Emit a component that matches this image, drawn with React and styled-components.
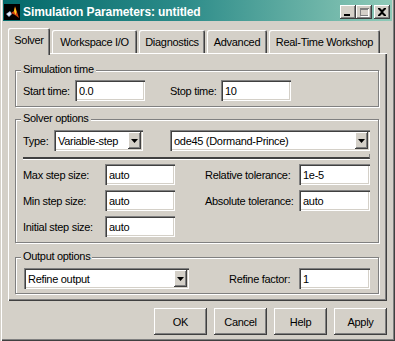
import styled, { createGlobalStyle } from "styled-components";

const Global = createGlobalStyle`
  html, body { margin: 0; padding: 0; background: #d4d0c8; }
  body { font-family: "Liberation Sans", Arial, sans-serif; font-size: 11px; letter-spacing: -0.3px; color: #000; }
  * { box-sizing: border-box; }
`;

const raised = `
  box-shadow: inset -1px -1px 0 #404040, inset 1px 1px 0 #fff, inset -2px -2px 0 #808080;
`;

const sunken = `
  box-shadow: inset 1px 1px 0 #808080, inset 2px 2px 0 #404040, inset -1px -1px 0 #fff, inset -2px -2px 0 #d4d0c8;
`;

const Window = styled.div`
  width: 395px;
  height: 341px;
  background: #d4d0c8;
  display: flex;
  flex-direction: column;
  padding: 0 3px 3px 3px;
  box-shadow: inset 1px 0 0 #d4d0c8, inset 2px 0 0 #fff, inset -1px -1px 0 #404040, inset -2px -2px 0 #808080;
`;

const TitleBar = styled.div`
  height: 21px;
  padding: 3px 2px 0 1px;
  display: flex;
  align-items: center;
  background: linear-gradient(to right, #03696a 0%, #2a8a88 45%, #8fcab8 100%);
`;

const TitleText = styled.div`
  flex: 1;
  margin-left: 3px;
  color: #fff;
  font-weight: bold;
  font-size: 12px;
  letter-spacing: -0.1px;
  white-space: nowrap;
`;

const CaptionButton = styled.div`
  width: 16px;
  height: 14px;
  background: #d4d0c8;
  margin-left: ${(p) => (p.$gap ? "2px" : "0")};
  display: flex;
  align-items: center;
  justify-content: center;
  ${raised}
`;

const Body = styled.div`
  flex: 1;
  display: flex;
  flex-direction: column;
  padding: 7px 5px 0 5px;
`;

const TabRow = styled.div`
  height: 25px;
  display: flex;
  align-items: flex-end;
  gap: 2px;
  position: relative;
  z-index: 1;
`;

const Tab = styled.div`
  width: ${(p) => p.$w}px;
  height: ${(p) => (p.$active ? 27 : 23)}px;
  margin-bottom: ${(p) => (p.$active ? -2 : 0)}px;
  padding-top: ${(p) => (p.$active ? 6 : 6)}px;
  text-align: center;
  white-space: nowrap;
  background: #d4d0c8;
  border-radius: 2px 2px 0 0;
  box-shadow: inset 1px 1px 0 #fff, inset -1px 0 0 #404040, inset -2px 0 0 #808080;
`;

const Panel = styled.div`
  height: 248px;
  padding: 17px 8px 7px 7px;
  display: flex;
  flex-direction: column;
  box-shadow: inset 1px 1px 0 #fff, inset -1px -1px 0 #404040, inset -2px -2px 0 #808080;
`;

const Group = styled.div`
  position: relative;
  height: ${(p) => p.$h}px;
  margin-top: ${(p) => p.$mt || 0}px;
  padding: ${(p) => p.$pt}px 8px 0 7px;
  border: 1px solid #808080;
  box-shadow: 1px 1px 0 #fff, inset 1px 1px 0 #fff;
`;

const Legend = styled.div`
  position: absolute;
  top: -8px;
  left: 5px;
  padding: 0 2px;
  line-height: 13px;
  background: #d4d0c8;
  white-space: nowrap;
`;

const Row = styled.div`
  display: flex;
  align-items: center;
`;

const Label = styled.div`
  width: ${(p) => p.$w}px;
  margin-left: ${(p) => p.$ml || 0}px;
  white-space: nowrap;
`;

const Field = styled.input`
  width: ${(p) => p.$w}px;
  height: 21px;
  border: none;
  outline: none;
  padding: 0 4px;
  margin: 0;
  background: #fff;
  font: inherit;
  letter-spacing: inherit;
  color: #000;
  ${sunken}
`;

const Combo = styled.div`
  width: ${(p) => p.$w}px;
  height: 21px;
  margin-left: ${(p) => p.$ml || 0}px;
  padding: 2px;
  display: flex;
  background: #fff;
  ${sunken}
`;

const ComboText = styled.div`
  flex: 1;
  padding-left: 2px;
  display: flex;
  align-items: center;
  white-space: nowrap;
`;

const ComboButton = styled.div`
  width: 13px;
  background: #d4d0c8;
  display: flex;
  align-items: center;
  justify-content: center;
  ${raised}
`;

const Separator = styled.div`
  height: 5px;
  margin: 3px 0 5px;
  border-right: 1px solid #808080;
  border-bottom: 2px solid #404040;
  box-shadow: 0 1px 0 #fff;
`;

const StepGrid = styled.div`
  display: grid;
  grid-template-columns: 82px 70px 30px 94px 71px;
  grid-auto-rows: 21px;
  row-gap: 5px;
  align-items: center;
`;

const Spacer = styled.div`
  flex: 1;
`;

const ButtonRow = styled.div`
  margin-top: 7px;
  display: flex;
  justify-content: flex-end;
  gap: 7px;
`;

const Button = styled.div`
  width: 53px;
  height: 27px;
  display: flex;
  align-items: center;
  justify-content: center;
  background: #d4d0c8;
  ${raised}
`;

const Arrow = () => (
  <svg width="7" height="4" viewBox="0 0 7 4">
    <path d="M0 0h7L3.5 4z" fill="#000" />
  </svg>
);

const AppIcon = () => (
  <svg width="16" height="16" viewBox="0 0 16 16">
    <rect width="16" height="16" fill="#000" />
    <path d="M2 10l4-3 2 3-3 3z" fill="#9fb8dc" />
    <path d="M3 10l3-2 1 2-2 2z" fill="#e8eef8" />
    <path d="M7 9l3-2 1-5 2 6 2 6-4-3z" fill="#d04010" />
    <path d="M10 7l1-4 1.5 5-1 3z" fill="#f8d020" />
  </svg>
);

const tabs = [
  ["Solver", 42],
  ["Workspace I/O", 85],
  ["Diagnostics", 66],
  ["Advanced", 60],
  ["Real-Time Workshop", 111],
];

export default function App() {
  return (
    <>
      <Global />
      <Window>
        <TitleBar>
          <AppIcon />
          <TitleText>Simulation Parameters: untitled</TitleText>
          <CaptionButton>
            <svg width="16" height="14" viewBox="0 0 16 14">
              <rect x="4" y="9" width="6" height="2" fill="#000" />
            </svg>
          </CaptionButton>
          <CaptionButton>
            <svg width="16" height="14" viewBox="0 0 16 14">
              <path d="M4 3h9v8H4z M5 5v5h7V5z" fill="#808080" fillRule="evenodd" />
              <path d="M13 4v8H5v-1h7V4z" fill="#fff" />
            </svg>
          </CaptionButton>
          <CaptionButton $gap>
            <svg width="16" height="14" viewBox="0 0 16 14">
              <path d="M4 3h2l2 2 2-2h2v1l-3 3 3 3v1h-2l-2-2-2 2H4v-1l3-3-3-3z" fill="#000" />
            </svg>
          </CaptionButton>
        </TitleBar>
        <Body>
          <TabRow>
            {tabs.map(([t, w], i) => (
              <Tab key={t} $w={w} $active={i === 0}>
                {t}
              </Tab>
            ))}
          </TabRow>
          <Panel>
            <Group $h={37} $pt={9}>
              <Legend>Simulation time</Legend>
              <Row>
                <Label $w={52}>Start time:</Label>
                <Field $w={70} defaultValue="0.0" />
                <Label $w={51} $ml={25}>Stop time:</Label>
                <Field $w={70} defaultValue="10" />
              </Row>
            </Group>
            <Group $h={124} $pt={10} $mt={12}>
              <Legend>Solver options</Legend>
              <Row>
                <Label $w={31}>Type:</Label>
                <Combo $w={89}>
                  <ComboText>Variable-step</ComboText>
                  <ComboButton><Arrow /></ComboButton>
                </Combo>
                <Combo $w={200} $ml={27}>
                  <ComboText>ode45 (Dormand-Prince)</ComboText>
                  <ComboButton><Arrow /></ComboButton>
                </Combo>
              </Row>
              <Separator />
              <StepGrid>
                <Label>Max step size:</Label>
                <Field $w={70} defaultValue="auto" />
                <span />
                <Label>Relative tolerance:</Label>
                <Field $w={71} defaultValue="1e-5" />
                <Label>Min step size:</Label>
                <Field $w={70} defaultValue="auto" />
                <span />
                <Label>Absolute tolerance:</Label>
                <Field $w={71} defaultValue="auto" />
                <Label>Initial step size:</Label>
                <Field $w={70} defaultValue="auto" />
              </StepGrid>
            </Group>
            <Group $h={37} $pt={10} $mt={14}>
              <Legend>Output options</Legend>
              <Row>
                <Combo $w={165} $ml={1}>
                  <ComboText>Refine output</ComboText>
                  <ComboButton><Arrow /></ComboButton>
                </Combo>
                <Spacer />
                <Label $w={70}>Refine factor:</Label>
                <Field $w={71} defaultValue="1" />
              </Row>
            </Group>
          </Panel>
          <ButtonRow>
            <Button>OK</Button>
            <Button>Cancel</Button>
            <Button>Help</Button>
            <Button>Apply</Button>
          </ButtonRow>
        </Body>
      </Window>
    </>
  );
}
